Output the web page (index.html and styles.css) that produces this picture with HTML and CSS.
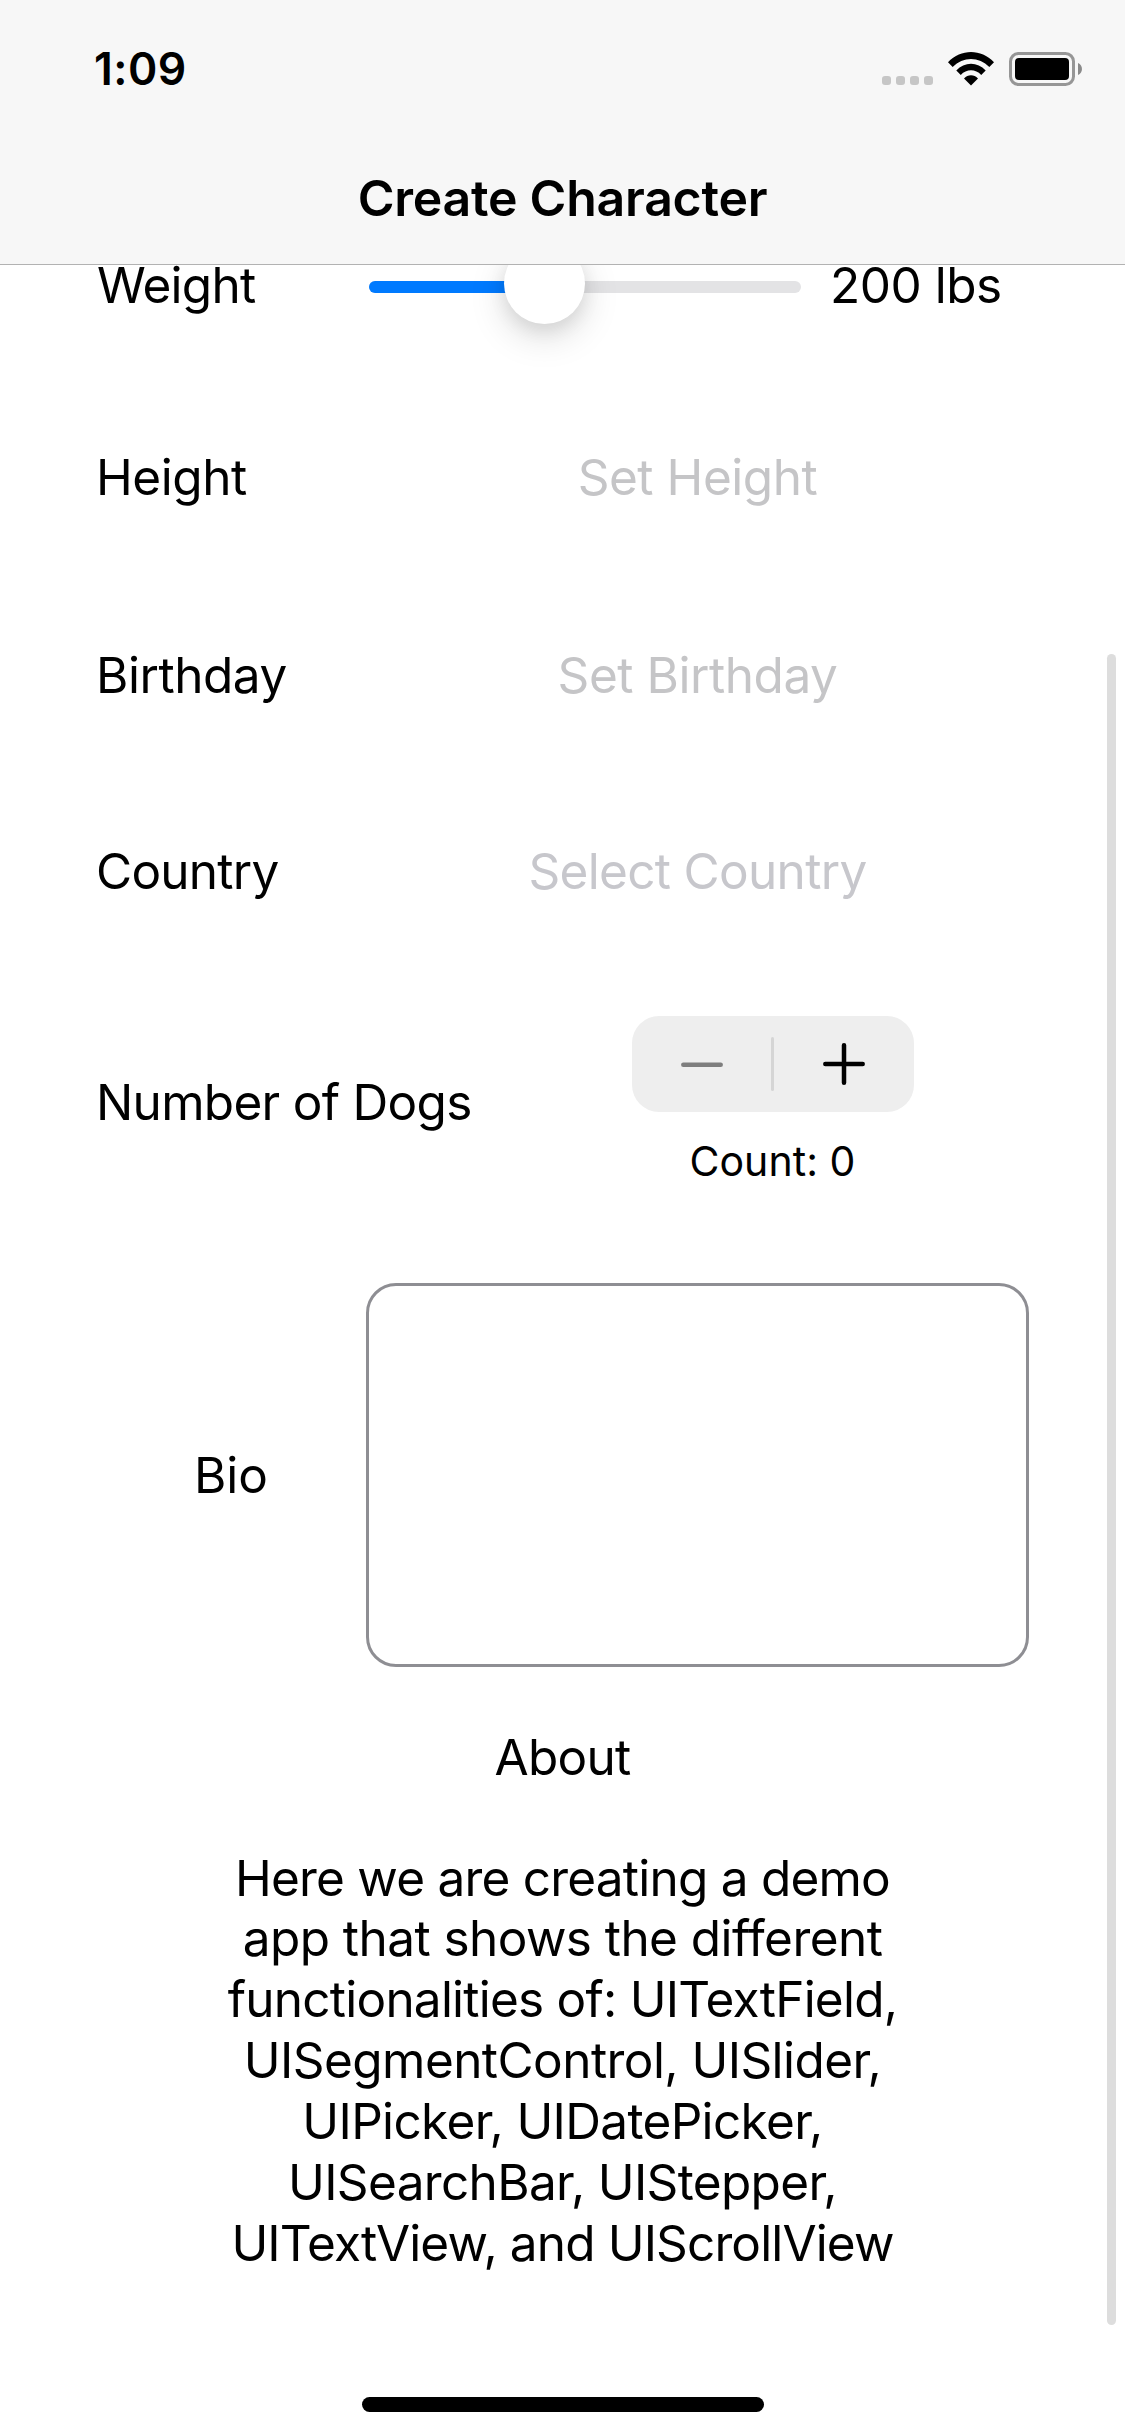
FILE: index.html
```html
<!DOCTYPE html>
<html lang="en">
<head>
<meta charset="utf-8">
<title>Create Character</title>
<link rel="stylesheet" href="styles.css">
</head>
<body>
<div class="screen">
  <header class="header">
    <div class="status">
      <span class="clock">1:09</span>
      <div class="indicators">
        <div class="signal"><i></i><i></i><i></i><i></i></div>
        <svg class="wifi" width="46" height="34" viewBox="0 0 46 34">
          <path d="M0 10.3C13-3.4 33-3.4 46 10.3L41.300 15C31 4.300 15 4.300 4.700 15Z"/>
          <path d="M8.300 18.500C16.500 9.500 29.500 9.500 37.700 18.500L33.200 23C27.500 16.800 18.500 16.800 12.800 23Z"/>
          <path d="M16 26.400C20.100 22.300 25.900 22.300 30 26.400L23 33.400Z"/>
        </svg>
        <svg class="battery" width="74" height="34" viewBox="0 0 74 34">
          <rect x="1.500" y="1.500" width="63" height="31" rx="8" fill="none" stroke="#969696" stroke-width="3"/>
          <rect x="6" y="6" width="54" height="22" rx="4"/>
          <path d="M69 11C74.300 13 74.300 21 69 23Z" fill="#8a8a8a"/>
        </svg>
      </div>
    </div>
    <h1 class="title">Create Character</h1>
  </header>

  <main class="form">
    <div class="row weight">
      <label class="label snug">Weight</label>
      <div class="slider"><div class="fill"></div><div class="thumb"></div></div>
      <span class="value">200 lbs</span>
    </div>
    <div class="row height">
      <label class="label">Height</label>
      <span class="field">Set Height</span>
    </div>
    <div class="row birthday">
      <label class="label">Birthday</label>
      <span class="field">Set Birthday</span>
    </div>
    <div class="row country">
      <label class="label snug">Country</label>
      <span class="field select">Select Country</span>
    </div>
    <div class="row dogs">
      <label class="label">Number of Dogs</label>
      <div class="counter">
        <div class="stepper">
          <svg class="minus" viewBox="0 0 42 42"><path d="M2.300 21.700H39.700"/></svg>
          <span class="divider"></span>
          <svg class="plus" viewBox="0 0 42 42"><path d="M2.300 21H39.700M21 2.300V39.700"/></svg>
        </div>
        <span class="count">Count: 0</span>
      </div>
    </div>
    <div class="row bio">
      <label class="label">Bio</label>
      <div class="textbox"></div>
    </div>
    <h2 class="about-title">About</h2>
    <p class="about">
      <span class="tight">Here we are creating a demo</span>
      <span class="loose">app that shows the different</span>
      <span class="tight">functionalities of: UITextField,</span>
      <span class="loose">UISegmentControl, UISlider,</span>
      <span class="medium">UIPicker, UIDatePicker,</span>
      <span class="medium">UISearchBar, UIStepper,</span>
      <span class="tighter">UITextView, and UIScrollView</span>
    </p>
  </main>
  <div class="scrollbar"></div>
  <div class="home"></div>
</div>
</body>
</html>
```
FILE: styles.css
```css
* { box-sizing: border-box; margin: 0; }

body { background: #fff; }

.screen {
  position: relative;
  display: flex;
  flex-direction: column;
  width: 1125px;
  height: 2436px;
  overflow: hidden;
  background: #fff;
  color: #000;
  font: 400 49.5px/60px Inter, sans-serif;
  letter-spacing: -0.45px;
}

/* Status bar and navigation bar */
.header {
  position: relative;
  z-index: 2;
  flex: none;
  height: 265px;
  background: #f7f7f7;
  border-bottom: 1px solid #b2b2b2;
}

.status {
  display: flex;
  justify-content: space-between;
  height: 132px;
  padding: 42px 42px 0 94px;
}

.clock {
  font-size: 44.5px;
  font-weight: 600;
  line-height: 54px;
  letter-spacing: 0.5px;
}

.indicators { display: flex; padding-top: 10px; height: 44px; }

.signal { display: flex; gap: 5px; padding-top: 24px; }
.signal i { width: 9px; height: 9px; border-radius: 3px; background: #c6c6c6; }

.wifi { margin-left: 15px; }
.battery { margin-left: 15px; }

.title {
  padding-top: 36px;
  text-align: center;
  font-size: 50px;
  font-weight: 600;
  line-height: 60px;
  letter-spacing: -0.25px;
}

/* Form, scrolled slightly under the header */
.form { margin-top: -10px; }

.row {
  display: grid;
  grid-template-columns: 270px 663px;
  align-items: center;
  width: 933px;
  margin-left: 96px;
  white-space: nowrap;
}

.snug { letter-spacing: -0.75px; }
.loose { letter-spacing: -0.56px; }
.medium { letter-spacing: -0.66px; }
.tight { letter-spacing: -0.77px; }
.tighter { letter-spacing: -0.86px; }

.weight { grid-template-columns: 273px 432px 1fr; }
.height { margin-top: 132px; }
.birthday { margin-top: 138px; }
.country { margin-top: 136px; }
.dogs { margin-top: 115px; }
.bio { margin-top: 95px; }

.weight .label { padding-left: 1px; }
.value { padding-left: 29px; letter-spacing: -0.48px; }

.field { text-align: center; color: #c5c5c7; }
.select { color: #c7c7cc; letter-spacing: -0.68px; }

.slider {
  position: relative;
  height: 12px;
  margin-top: 4px;
  border-radius: 6px;
  background: #e3e3e5;
}
.fill { width: 175px; height: 12px; border-radius: 6px; background: #007aff; }
.thumb {
  position: absolute;
  left: 135px;
  top: -38px;
  width: 81px;
  height: 81px;
  border-radius: 50%;
  background: #fff;
  box-shadow: 0 12px 36px rgba(0, 0, 0, 0.15), 0 6px 18px rgba(0, 0, 0, 0.08);
}

.counter {
  justify-self: start;
  display: flex;
  flex-direction: column;
  align-items: center;
  margin-left: 266px;
  height: 172px;
}
.stepper {
  display: flex;
  align-items: center;
  width: 282px;
  height: 96px;
  padding-left: 49px;
  border-radius: 27px;
  background: #eee;
}
.stepper svg { width: 42px; height: 42px; fill: none; stroke-width: 4.5; stroke-linecap: round; }
.minus { stroke: #7e7e7e; }
.plus { stroke: #000; }
.divider { width: 3px; height: 54px; margin: 0 49px 0 48px; border-radius: 2px; background: #d5d5d5; }
.count { margin: 24px 1px 0 0; font-size: 41px; line-height: 50px; letter-spacing: 0.05px; }
.dogs .label { letter-spacing: -0.7px; }

.bio .label { text-align: center; letter-spacing: 0; }
.textbox {
  height: 384px;
  border: 3px solid #8e8e93;
  border-radius: 30px;
}

.about-title {
  margin-top: 60px;
  text-align: center;
  font-size: inherit;
  font-weight: 400;
  line-height: 60px;
  letter-spacing: -0.7px;
}

.about {
  margin-top: 60.500px;
  text-align: center;
  line-height: 60.9px;
  font-variant-ligatures: none;
}
.about span { display: block; }

/* Overlays */
.scrollbar {
  position: absolute;
  left: 1107px;
  top: 654px;
  width: 9px;
  height: 1671px;
  border-radius: 5px;
  background: #ddd;
}
.home {
  position: absolute;
  left: 362px;
  bottom: 24px;
  width: 402px;
  height: 15px;
  border-radius: 8px;
  background: #000;
}
```
